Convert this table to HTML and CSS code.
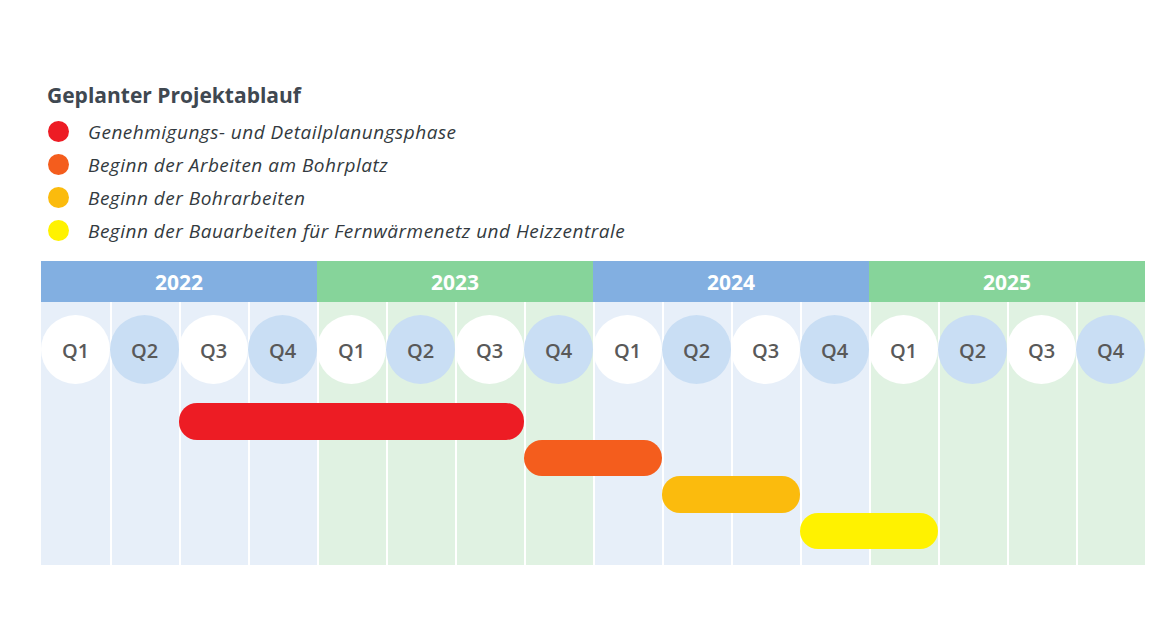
FILE: index.html
```html
<!DOCTYPE html>
<html lang="de">
<head>
<meta charset="utf-8">
<title>Geplanter Projektablauf</title>
<link rel="stylesheet" href="styles.css">
</head>
<body>
<main class="page">
  <section class="intro">
    <h1 class="title">Geplanter Projektablauf</h1>
    <ul class="legend">
      <li class="legend-item"><span class="dot red"></span>Genehmigungs- und Detailplanungsphase</li>
      <li class="legend-item"><span class="dot orange"></span>Beginn der Arbeiten am Bohrplatz</li>
      <li class="legend-item"><span class="dot amber"></span>Beginn der Bohrarbeiten</li>
      <li class="legend-item"><span class="dot yellow"></span>Beginn der Bauarbeiten für Fernwärmenetz und Heizzentrale</li>
    </ul>
  </section>

  <section class="chart">
    <div class="years">
      <div class="year blue">2022</div>
      <div class="year green">2023</div>
      <div class="year blue">2024</div>
      <div class="year green">2025</div>
    </div>
    <div class="grid">
      <div class="col b c1"></div><div class="col b c2"></div><div class="col b c3"></div><div class="col b c4"></div>
      <div class="col g c5"></div><div class="col g c6"></div><div class="col g c7"></div><div class="col g c8"></div>
      <div class="col b c9"></div><div class="col b c10"></div><div class="col b c11"></div><div class="col b c12"></div>
      <div class="col g c13"></div><div class="col g c14"></div><div class="col g c15"></div><div class="col g c16"></div>

      <div class="q odd c1">Q1</div><div class="q even c2">Q2</div><div class="q odd c3">Q3</div><div class="q even c4">Q4</div>
      <div class="q odd c5">Q1</div><div class="q even c6">Q2</div><div class="q odd c7">Q3</div><div class="q even c8">Q4</div>
      <div class="q odd c9">Q1</div><div class="q even c10">Q2</div><div class="q odd c11">Q3</div><div class="q even c12">Q4</div>
      <div class="q odd c13">Q1</div><div class="q even c14">Q2</div><div class="q odd c15">Q3</div><div class="q even c16">Q4</div>

      <div class="bar bar-red"></div>
      <div class="bar bar-orange"></div>
      <div class="bar bar-amber"></div>
      <div class="bar bar-yellow"></div>
    </div>
  </section>
</main>
</body>
</html>
```

FILE: styles.css
```css
html, body {
  margin: 0;
  padding: 0;
  background: #ffffff;
}

.page {
  padding: 82px 25px 0 41px;
}

.intro {
  padding-left: 6px;
  font-family: "Open Sans", "Noto Sans", sans-serif;
}

.title {
  margin: 0;
  font-size: 21px;
  line-height: 26px;
  font-weight: 700;
  color: #3f4851;
}

.legend {
  list-style: none;
  margin: 7px 0 0 0;
  padding: 0;
}

.legend-item {
  display: flex;
  align-items: center;
  height: 33px;
  font-size: 19px;
  letter-spacing: 0.5px;
  font-style: italic;
  color: #333a40;
}

.dot {
  width: 21px;
  height: 21px;
  border-radius: 50%;
  margin-left: 1px;
  margin-right: 19px;
  flex: none;
}

.red { background: #ed1c24; }
.orange { background: #f45d1d; }
.amber { background: #fbbb0d; }
.yellow { background: #fff200; }

.chart {
  margin-top: 14px;
  width: 1104px;
  font-family: "Open Sans", "Noto Sans", sans-serif;
}

.years {
  display: grid;
  grid-template-columns: repeat(4, 276px);
  height: 41px;
}

.year {
  display: flex;
  align-items: center;
  justify-content: center;
  color: #ffffff;
  font-weight: 700;
  font-size: 21px;
}

.year.blue { background: #82afe1; }
.year.green { background: #86d49a; }

.grid {
  display: grid;
  grid-template-columns: repeat(16, 69px);
  grid-template-rows: 13px 69px 19px 36.5px 36.5px 36.5px 36.5px 16px;
}

.col {
  grid-row: 1 / -1;
  border-left: 2px solid #ffffff;
}

.col.c1 { border-left: 0; }
.col.b { background: #e7eff9; }
.col.g { background: #e0f2e2; }

.c1 { grid-column: 1; }
.c2 { grid-column: 2; }
.c3 { grid-column: 3; }
.c4 { grid-column: 4; }
.c5 { grid-column: 5; }
.c6 { grid-column: 6; }
.c7 { grid-column: 7; }
.c8 { grid-column: 8; }
.c9 { grid-column: 9; }
.c10 { grid-column: 10; }
.c11 { grid-column: 11; }
.c12 { grid-column: 12; }
.c13 { grid-column: 13; }
.c14 { grid-column: 14; }
.c15 { grid-column: 15; }
.c16 { grid-column: 16; }

.q {
  grid-row: 2;
  border-radius: 50%;
  display: flex;
  align-items: center;
  justify-content: center;
  padding-top: 1px;
  box-sizing: border-box;
  font-size: 20px;
  font-weight: 600;
  color: #595959;
  z-index: 1;
}

.q.odd { background: #ffffff; }
.q.even { background: #c9def4; }

.bar {
  border-radius: 18px;
  z-index: 1;
}

.bar-red { grid-row: 4; grid-column: 3 / 8; background: #ed1c24; }
.bar-orange { grid-row: 5; grid-column: 8 / 10; background: #f45d1d; }
.bar-amber { grid-row: 6; grid-column: 10 / 12; background: #fbbb0d; }
.bar-yellow { grid-row: 7; grid-column: 12 / 14; background: #fff200; }
```
